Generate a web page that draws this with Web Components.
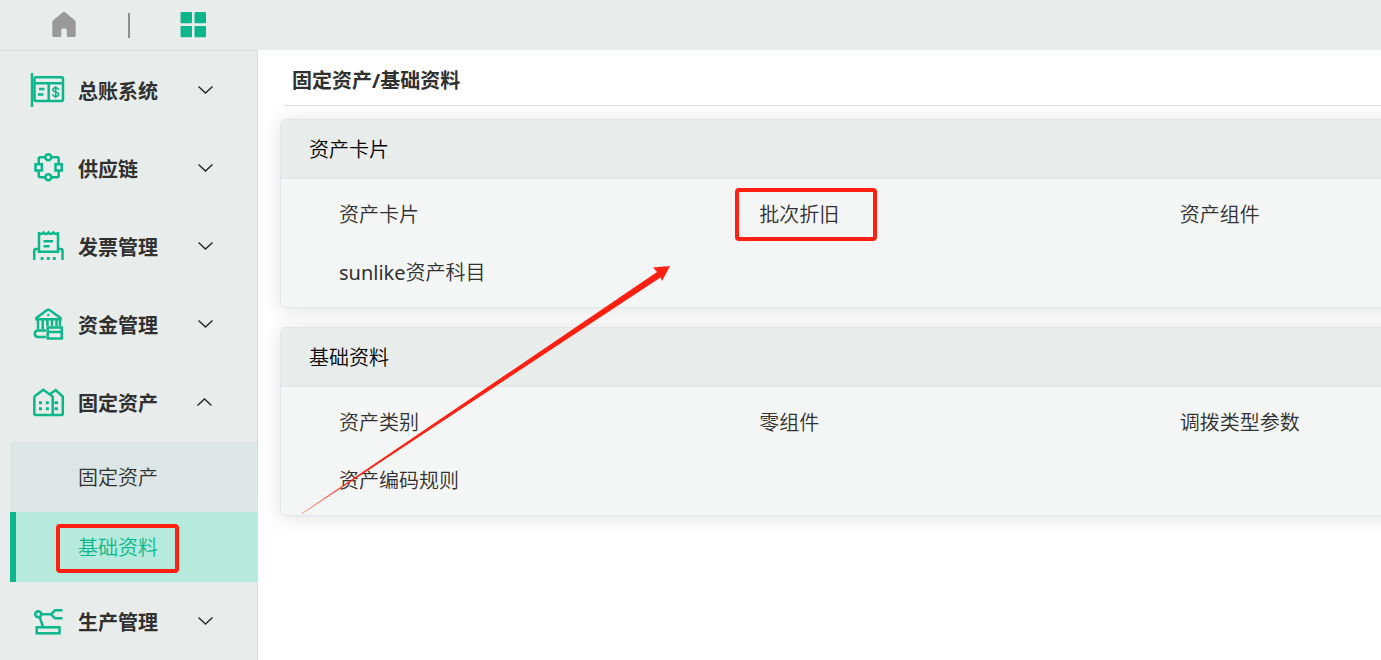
<!DOCTYPE html>
<html lang="zh-CN">
<head>
<meta charset="utf-8">
<title>固定资产/基础资料</title>
<style>
  html, body { margin: 0; }
  body {
    font-family: "Noto Sans", "Noto Sans CJK SC", sans-serif;
    font-size: 20px;
    line-height: 28px;
    color: #303030;
    background: #fff;
    --green: #0bb78a;
    --bar: #e8edeb;
    --mark: #ff2012;
    --text-weight: 350;
  }
</style>
</head>
<body>
<app-shell>
  <top-bar slot="top"></top-bar>
  <side-nav slot="side">
    <nav-group icon="ledger" label="总账系统"></nav-group>
    <nav-group icon="chain" label="供应链"></nav-group>
    <nav-group icon="invoice" label="发票管理"></nav-group>
    <nav-group icon="bank" label="资金管理"></nav-group>
    <nav-group icon="building" label="固定资产" open>
      <nav-link>固定资产</nav-link>
      <nav-link active marked>基础资料</nav-link>
    </nav-group>
    <nav-group icon="robot" label="生产管理"></nav-group>
  </side-nav>
  <page-title>固定资产/基础资料</page-title>
  <link-card heading="资产卡片">
    <card-link>资产卡片</card-link>
    <card-link marked>批次折旧</card-link>
    <card-link>资产组件</card-link>
    <card-link><span style="font-weight:400">sunlike</span>资产科目</card-link>
  </link-card>
  <link-card heading="基础资料">
    <card-link>资产类别</card-link>
    <card-link>零组件</card-link>
    <card-link>调拨类型参数</card-link>
    <card-link>资产编码规则</card-link>
  </link-card>
  <mark-arrow slot="overlay"></mark-arrow>
</app-shell>

<script>
const ICONS = {
  ledger: `<path d="M2 1V35"/><rect x="4.5" y="5.3" width="28.5" height="23.7" rx="1.5"/><path d="M4.5 11.3H33M18.7 11.3V29M9 17h5.500M8 22.500h5.500"/><path stroke-width="1.500" d="M28.500 17.800C28.300 16.400 27.200 15.700 25.700 15.700C24 15.700 22.900 16.500 22.900 17.800C22.900 20.800 28.600 19.200 28.600 22.300C28.600 23.700 27.400 24.500 25.700 24.500C24 24.500 22.900 23.700 22.800 22.200M25.700 13.900V26.300"/>`,
  chain: `<path d="M15 7.300H10.200Q8.700 7.300 8.700 8.800V14M8.700 20.500V25.800Q8.700 27.300 10.200 27.300H15M21.600 27.300H27.200Q28.700 27.300 28.700 25.800V20.500M28.700 14V8.800Q28.700 7.300 27.200 7.300H21.600"/><circle cx="18.300" cy="7.300" r="3"/><circle cx="18.300" cy="27.300" r="3"/><rect x="5.500" y="14.200" width="6.300" height="6.300"/><rect x="25.500" y="14.200" width="6.300" height="6.300"/>`,
  invoice: `<path d="M9 4V23.700H28V4M9 5.200Q11 7.200 13.500 4.500Q16 7.500 18.500 4.500Q21 7.500 23.500 4.500Q26 7.200 28 5.200M13.500 13.300H23M13.500 18.300H19.500M4.200 32V23Q4.200 21 6.200 21H9M28 21H30.500Q32.500 21 32.500 23V32"/><path stroke-width="3" d="M10.700 30.500H13.500M16.900 30.500H19.700M22.900 30.500H25.700"/>`,
  bank: `<path d="M5.200 13.300H31.800M5.500 12.500L16.800 4.300Q18.300 3.300 19.800 4.300L31.300 12.500M8 14V23M12.700 14V23M17.400 14V20M22 14V20M26.500 14V20M30 14V20M16 24.500H8Q4.800 24.500 4.800 27.800Q4.800 31 8 31H16"/><rect x="17.700" y="21.500" width="14" height="11"/><path d="M17.700 26H32"/><circle cx="18.300" cy="9" r="1.200" fill="currentColor" stroke="none"/>`,
  building: `<path d="M4.300 12.600L13.300 5.800L22.700 12.600V31M4.300 12.600V29.500Q4.300 31 5.800 31H31.300Q32.800 31 32.800 29.500V12.600L25.700 6L20.500 9.700"/><path stroke-width="3" d="M9 18.700h3M15.800 18.700h3M9 24.700h3M15.800 24.700h3M24.500 18.700h3.500M24.500 24.700h3.500"/>`,
  robot: `<circle cx="8.300" cy="11.300" r="3"/><path d="M11.300 11.300H21L25 7.300H32.500M21 11.300L25 15.300H32.500M9.700 14.200L13 24"/><rect x="6.700" y="24.300" width="22.800" height="6"/>`
};

function define(name, markup, setup) {
  const template = document.createElement('template');
  template.innerHTML = markup;
  customElements.define(name, class extends HTMLElement {
    constructor() {
      super();
      this.attachShadow({ mode: 'open' }).append(template.content.cloneNode(true));
    }
    connectedCallback() { if (setup) setup(this, this.shadowRoot); }
  });
}

define('app-shell', `
  <style>
    :host { display: grid; grid-template: 50px auto / 258px minmax(0, 1fr);
      min-height: 100vh; position: relative; overflow: hidden; }
    header { grid-column: 1 / -1; display: grid; }
    aside { display: grid; }
    main { padding-left: 22px; overflow: hidden; }
    /* the card grid is wider than the viewport and runs off its right edge */
    .wide { display: flex; flex-direction: column; gap: 19px; margin-right: -220px; }
  </style>
  <header><slot name="top"></slot></header>
  <aside><slot name="side"></slot></aside>
  <main><div class="wide"><slot></slot></div></main>
  <slot name="overlay"></slot>`);

define('top-bar', `
  <style>
    :host { display: flex; align-items: center; background: var(--bar); padding-left: 50px; }
    button { border: 0; padding: 0; background: none; display: grid; cursor: pointer; }
    svg { width: 28px; height: 28px; display: block; }
    i { width: 2px; height: 25px; background: #8c8f8e; margin: 0 50px; }
    .home { color: #999; } .apps { color: var(--green); }
  </style>
  <button class="home" aria-label="首页"><svg viewBox="0 0 28 28"><path fill="currentColor" d="M12.900 1.300Q14 .4 15.100 1.300L24.600 9Q25.700 9.900 25.700 11.300V24.500Q25.700 26 24.200 26H17.500Q16.800 26 16.800 25V19Q16.800 17.300 14 17.300Q11.300 17.300 11.300 19V25Q11.300 26 10.600 26H3.800Q2.300 26 2.300 24.500V11.300Q2.300 9.900 3.400 9Z"/></svg></button>
  <i></i>
  <button class="apps" aria-label="应用"><svg viewBox="0 0 28 28" fill="currentColor"><rect x=".500" y="1" width="11.500" height="11.300" rx="1"/><rect x="14.500" y="1" width="11.500" height="11.300" rx="1"/><rect x=".500" y="15" width="11.500" height="11.300" rx="1"/><rect x="14.500" y="15" width="11.500" height="11.300" rx="1"/></svg></button>`);

define('side-nav', `
  <style>
    :host { display: block; background: var(--bar); border-top: 1px solid #dadfde; border-right: 1px solid #dadfde; }
  </style>
  <nav><slot></slot></nav>`);

define('nav-group', `
  <style>
    :host { display: block; }
    button { width: 100%; height: 78px; display: flex; align-items: center; border: 0; background: none;
      padding: 0 44px 0 30px; font: inherit; font-weight: 700; color: #303030; text-align: left; cursor: pointer; }
    .icon { width: 36px; height: 36px; margin-right: 12px; color: var(--green); fill: none;
      stroke: currentColor; stroke-width: 2.5; flex: none; }
    span { flex: 1; padding-top: 3px; }
    .chev { width: 16px; height: 10px; fill: none; stroke: #222; stroke-width: 1.3; }
    :host([open]) .chev { transform: rotate(180deg); }
    div { padding-left: 10px; display: none; }
    :host([open]) div { display: block; padding-top: 1px; }
  </style>
  <button><svg class="icon" viewBox="0 0 36 36" aria-hidden="true"></svg><span></span>
    <svg class="chev" viewBox="0 0 16 10" aria-hidden="true"><path d="M1.500 1.500L8.500 8L15.500 1.500"/></svg></button>
  <div><slot></slot></div>`,
  (host, root) => {
    const button = root.querySelector('button');
    root.querySelector('.icon').innerHTML = ICONS[host.getAttribute('icon')];
    root.querySelector('span').textContent = host.getAttribute('label');
    button.setAttribute('aria-expanded', host.hasAttribute('open'));
    button.onclick = () => button.setAttribute('aria-expanded', host.toggleAttribute('open'));
  });

define('nav-link', `
  <style>
    :host { display: block; background: #dde6e4; }
    a { display: flex; align-items: center; box-sizing: border-box; height: 70px; padding: 2px 0 0 62px;
      border-left: 6px solid transparent; color: #303030; text-decoration: none; font-weight: var(--text-weight); }
    :host([active]) a { background: #b5eadc; border-color: var(--green); color: var(--green); }
    span { position: relative; }
    :host([marked]) span::after { content: ""; position: absolute; inset: -10px -21px -11px -22px;
      border: 4px solid var(--mark); border-radius: 4px; }
  </style>
  <a href="#"><span><slot></slot></span></a>`);

define('page-title', `
  <style>
    :host { display: block; margin: 0 0 -6px 4px; border-bottom: 1px solid #dedede; }
    h1 { margin: 0; padding: 17px 0 10px 8px; font-size: 20px; line-height: 28px; font-weight: 700; }
  </style>
  <h1><slot></slot></h1>`);

define('link-card', `
  <style>
    :host { display: block; border: 1px solid #e1e6ea; border-radius: 6px; background: #f4f6f5;
      box-shadow: 0 2px 20px rgba(0, 0, 0, .12); }
    h2 { margin: 0; padding: 16px 28px 14px; border-bottom: 1px solid #e1e6ea; border-radius: 6px 6px 0 0;
      background: #e8edeb; font-size: 20px; line-height: 28px; font-weight: var(--text-weight); color: #000; }
    .grid { display: grid; grid-template-columns: repeat(3, minmax(0, 1fr)); padding: 7px 0 5px 58px; }
  </style>
  <section><h2></h2><div class="grid"><slot></slot></div></section>`,
  (host, root) => { root.querySelector('h2').textContent = host.getAttribute('heading'); });

define('card-link', `
  <style>
    :host { display: flex; align-items: center; height: 58px; }
    a { position: relative; color: #303030; text-decoration: none; font-weight: var(--text-weight); }
    :host([marked]) a::after { content: ""; position: absolute; inset: -13px -38px -12px -24px;
      border: 4px solid var(--mark); border-radius: 4px; }
  </style>
  <a href="#"><slot></slot></a>`);

define('mark-arrow', `
  <style>
    :host { position: absolute; left: 300px; top: 262px; pointer-events: none; }
    svg { display: block; width: 374px; height: 254px; }
  </style>
  <svg viewBox="0 0 374 254" aria-hidden="true">
    <defs><linearGradient id="fade" gradientUnits="userSpaceOnUse" x1="2" y1="252" x2="60" y2="213">
      <stop offset="0" stop-color="#ff2012" stop-opacity=".5"/><stop offset="1" stop-color="#ff2012"/>
    </linearGradient></defs>
    <path fill="url(#fade)" d="M1.500 251.500L357 10L353 5.500L370 4L362 19L360.500 15.500L2 252Z"/>
  </svg>`);
</script>
</body>
</html>
